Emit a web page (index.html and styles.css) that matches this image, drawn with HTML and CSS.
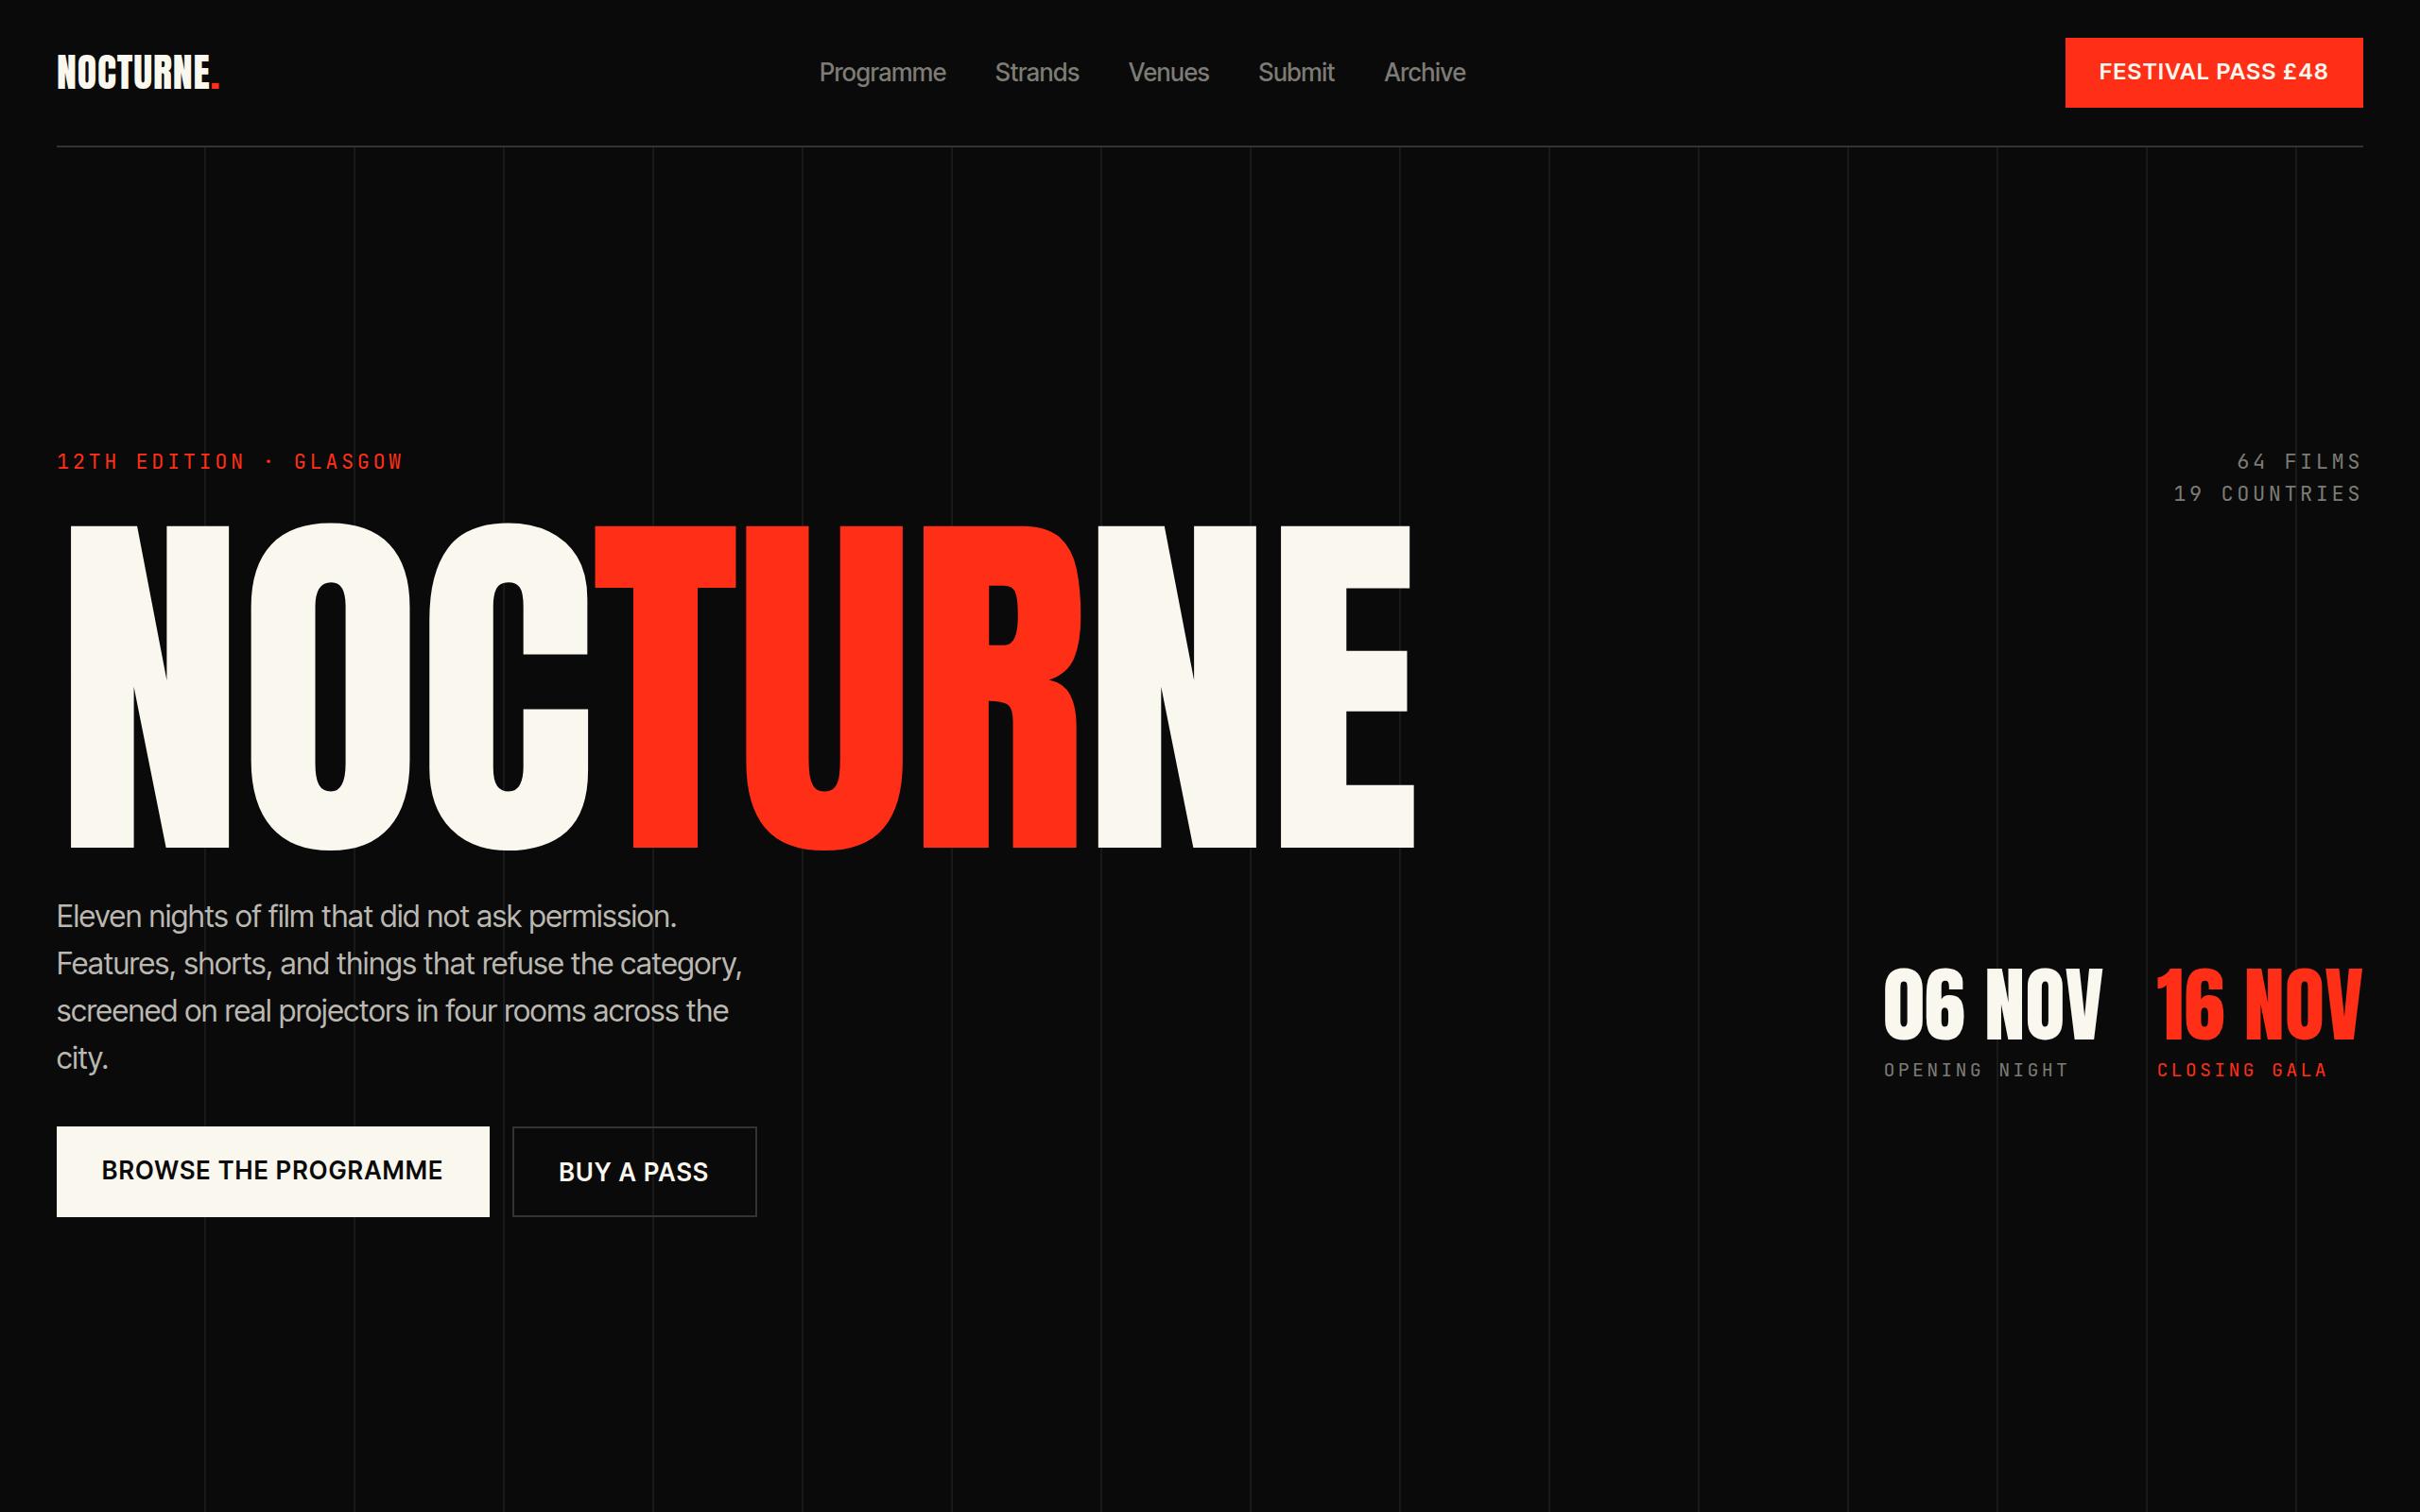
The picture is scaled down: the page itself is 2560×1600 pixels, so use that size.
FILE: index.html
```html
<!DOCTYPE html>
<html lang="en">
<head>
<meta charset="utf-8">
<meta name="viewport" content="width=device-width, initial-scale=1">
<title>Nocturne Film Festival</title>
<link rel="stylesheet" href="styles.css">
</head>
<body>
<header class="site-header">
  <a class="logo" href="#">NOCTURNE<span class="accent">.</span></a>
  <nav class="nav" aria-label="Main">
    <a href="#">Programme</a>
    <a href="#">Strands</a>
    <a href="#">Venues</a>
    <a href="#">Submit</a>
    <a href="#">Archive</a>
  </nav>
  <button class="btn btn-pass" type="button">FESTIVAL PASS £48</button>
</header>
<main class="hero">
  <div class="hero-top">
    <p class="eyebrow accent">12TH EDITION · GLASGOW</p>
    <p class="eyebrow stats">64 FILMS<br>19 COUNTRIES</p>
  </div>
  <h1 class="title">NOC<span class="accent">TUR</span>NE</h1>
  <div class="hero-info">
    <p class="lede">Eleven nights of film that did not ask permission. Features, shorts, and things that refuse the category, screened on real projectors in four rooms across the city.</p>
    <div class="dates">
      <div class="date">
        <strong class="date-day">06 NOV</strong>
        <span class="date-label">OPENING NIGHT</span>
      </div>
      <div class="date accent">
        <strong class="date-day">16 NOV</strong>
        <span class="date-label">CLOSING GALA</span>
      </div>
    </div>
  </div>
  <div class="actions">
    <button class="btn btn-solid" type="button">BROWSE THE PROGRAMME</button>
    <button class="btn btn-outline" type="button">BUY A PASS</button>
  </div>
</main>
</body>
</html>
```
FILE: styles.css
```css
:root {
  --ink: #0a0a0a;
  --paper: #faf7ee;
  --red: #ff2e17;
  --muted: #7d7b75;
  --rule: #333333;
  --display: "Anton", sans-serif;
  --body: "Inter Tight", "Inter", sans-serif;
  --mono: "JetBrains Mono", "DejaVu Sans Mono", monospace;
}

* { box-sizing: border-box; }

body {
  margin: 0;
  min-height: 100vh;
  padding: 0 60px;
  display: flex;
  flex-direction: column;
  background: var(--ink);
  color: var(--paper);
  font-family: var(--body);
}

p, h1 { margin: 0; }
a { color: inherit; text-decoration: none; }

.site-header {
  display: flex;
  align-items: center;
  justify-content: space-between;
  padding: 40px 0;
  border-bottom: 2px solid var(--rule);
}

.logo {
  font: 400 42px/56px var(--display);
  letter-spacing: 0.02em;
}

.nav {
  display: flex;
  gap: 52px;
  color: var(--muted);
  font-size: 26px;
  font-weight: 500;
  line-height: 40px;
}

.btn {
  border: 0;
  border-radius: 0;
  font: 600 26px/40px var(--body);
  letter-spacing: 0.06em;
  cursor: pointer;
}

.btn-pass {
  padding: 21px 36px 23px;
  background: var(--red);
  color: var(--paper);
  font-size: 24px;
  line-height: 30px;
}

.hero {
  flex: 1;
  display: flex;
  flex-direction: column;
  justify-content: center;
  padding-top: 4px;
  background: repeating-linear-gradient(90deg, transparent 0 156px, #191919 156px 158px);
}

.hero-top,
.hero-info {
  display: flex;
  justify-content: space-between;
}

.hero-info { align-items: flex-end; }

.eyebrow {
  font: 400 22px/34px var(--mono);
  letter-spacing: 0.16em;
}

.stats {
  color: var(--muted);
  text-align: right;
}

.title {
  padding: 13px 0 40px;
  font: 400 396px/352px var(--display);
  letter-spacing: -0.01em;
}

.lede {
  max-width: 760px;
  color: #bab8b1;
  font-size: 32px;
  line-height: 50px;
}

.dates {
  display: flex;
  gap: 56px;
}

.date {
  display: flex;
  flex-direction: column;
  gap: 14px;
}

.date-day {
  font: 400 87px/82px var(--display);
}

.date-label {
  color: var(--muted);
  font: 400 20px/26px var(--mono);
  letter-spacing: 0.16em;
}

.actions {
  display: flex;
  gap: 24px;
  padding-top: 47px;
}

.btn-solid {
  padding: 27px 48px 29px;
  background: var(--paper);
  color: var(--ink);
}

.btn-outline {
  padding: 27px 48px 25px;
  border: 2px solid var(--rule);
  background: transparent;
  color: var(--paper);
}

.accent,
.accent .date-label { color: var(--red); }
```
